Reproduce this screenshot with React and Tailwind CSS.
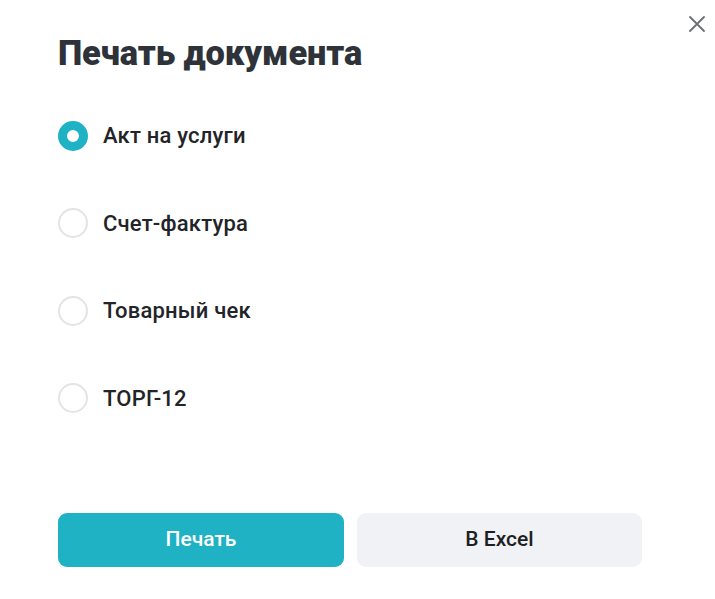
import React, { useState } from "react";

const options = ["Акт на услуги", "Счет-фактура", "Товарный чек", "ТОРГ-12"];

export default function App() {
  const [selected, setSelected] = useState(0);

  return (
    <div className="relative w-[715px] h-[599px] bg-white font-['Roboto','Liberation_Sans',sans-serif]">
      <button className="absolute right-[5px] top-[11px] p-1 text-[#6b6e73]" title="Закрыть">
        <svg width="18" height="18" viewBox="0 0 18 18" fill="none" stroke="currentColor" strokeWidth="1.8" strokeLinecap="round">
          <path d="M2 2L16 16M16 2L2 16" />
        </svg>
      </button>

      <div className="px-[58px] pt-[32px]">
        <h1 className="text-[34.4px] leading-[42px] font-black text-[#2e3239] tracking-[-0.1px]">Печать документа</h1>

        <div className="mt-[18px] flex flex-col">
          {options.map((label, i) => (
            <label key={label} onClick={() => setSelected(i)} className="flex items-center gap-[15px] h-[87.5px] cursor-pointer">
              {selected === i ? (
                <span className="w-[30px] h-[30px] rounded-full border-[9px] border-[#1fb1c4] bg-white flex-shrink-0" />
              ) : (
                <span className="w-[30px] h-[30px] rounded-full border-2 border-[#e3e4e6] bg-white flex-shrink-0" />
              )}
              <span className="text-[22px] font-medium text-[#222427] tracking-[0.2px]">{label}</span>
            </label>
          ))}
        </div>
      </div>

      <div className="absolute left-[58px] top-[513px] flex gap-[13px]">
        <button className="w-[286px] h-[54px] rounded-[9px] bg-[#1fb1c4] text-white text-[21px] font-medium">Печать</button>
        <button className="w-[285px] h-[54px] rounded-[9px] bg-[#f1f2f6] text-[#1d1f22] text-[21px] font-medium">В Excel</button>
      </div>
    </div>
  );
}
